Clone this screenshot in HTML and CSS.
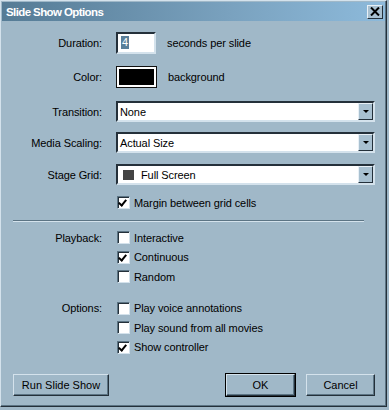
FILE: index.html
```html
<!DOCTYPE html>
<html lang="en">
<head>
    <meta charset="UTF-8">
    <title>Slide Show Options</title>
    <link rel="stylesheet" href="styles.css">
</head>
<body>
    <div class="window">
        <div class="titlebar">
            <span class="title">Slide Show Options</span>
            <button class="close-btn">
                <svg width="10" height="9" viewBox="0 0 10 9"><path d="M1 0.5 L9 8.5 M9 0.5 L1 8.5" stroke="#000" stroke-width="2"/></svg>
            </button>
        </div>

        <div class="content">
            <div class="form-row row-duration">
                <label>Duration:</label>
                <div class="field">
                    <span class="text-input"><span class="selected-text">4</span></span>
                    <span class="hint">seconds per slide</span>
                </div>
            </div>

            <div class="form-row row-color">
                <label>Color:</label>
                <div class="field">
                    <span class="swatch"><span class="swatch-fill"></span></span>
                    <span class="hint">background</span>
                </div>
            </div>

            <div class="form-row row-transition">
                <label>Transition:</label>
                <div class="select">
                    <span class="select-value">None</span>
                    <span class="select-btn"><span class="arrow"></span></span>
                </div>
            </div>

            <div class="form-row row-scaling">
                <label>Media Scaling:</label>
                <div class="select">
                    <span class="select-value">Actual Size</span>
                    <span class="select-btn"><span class="arrow"></span></span>
                </div>
            </div>

            <div class="form-row row-grid">
                <label>Stage Grid:</label>
                <div class="select">
                    <span class="select-value"><span class="grid-icon"></span>Full Screen</span>
                    <span class="select-btn"><span class="arrow"></span></span>
                </div>
            </div>

            <div class="form-row check-row row-margin">
                <span></span>
                <div class="check"><span class="box checked"></span>Margin between grid cells</div>
            </div>

            <div class="separator"></div>

            <div class="group group-playback">
                <div class="form-row check-row">
                    <label>Playback:</label>
                    <div class="check"><span class="box"></span>Interactive</div>
                </div>
                <div class="form-row check-row">
                    <span></span>
                    <div class="check"><span class="box checked"></span>Continuous</div>
                </div>
                <div class="form-row check-row">
                    <span></span>
                    <div class="check"><span class="box"></span>Random</div>
                </div>
            </div>

            <div class="group group-options">
                <div class="form-row check-row">
                    <label>Options:</label>
                    <div class="check"><span class="box"></span>Play voice annotations</div>
                </div>
                <div class="form-row check-row">
                    <span></span>
                    <div class="check"><span class="box"></span>Play sound from all movies</div>
                </div>
                <div class="form-row check-row">
                    <span></span>
                    <div class="check"><span class="box checked"></span>Show controller</div>
                </div>
            </div>

            <div class="button-bar">
                <button class="btn btn-run">Run Slide Show</button>
                <span class="spacer"></span>
                <button class="btn btn-default">OK</button>
                <button class="btn">Cancel</button>
            </div>
        </div>
    </div>
</body>
</html>
```

FILE: styles.css
```css
:root {
    --face: #a0b8c8;
    --light: #d4e2ec;
    --shadow: #5c7484;
    --dark: #24303a;
}

* {
    box-sizing: border-box;
    margin: 0;
    padding: 0;
}

body {
    background: var(--face);
    font-family: 'Liberation Sans', Arial, sans-serif;
    font-size: 11px;
    letter-spacing: -0.1px;
    color: #000;
}

.window {
    width: 387px;
    height: 407px;
    background: var(--face);
    border-top: 1px solid var(--light);
    border-left: 1px solid var(--light);
    border-right: 1px solid var(--dark);
    border-bottom: 1px solid var(--dark);
    box-shadow: inset -1px -1px 0 var(--shadow);
    padding: 1px;
}

/* title bar */
.titlebar {
    height: 19px;
    display: flex;
    align-items: center;
    justify-content: space-between;
    padding: 0 2px 0 4px;
    background: linear-gradient(90deg, #557b95 0%, #7aa2bf 60%, #8dbadb 100%);
}

.title {
    color: #fff;
    font-weight: bold;
    font-size: 11.5px;
    letter-spacing: -0.6px;
}

.close-btn {
    width: 16px;
    height: 14px;
    display: flex;
    align-items: center;
    justify-content: center;
    background: #a8c0d0;
    border: 1px solid;
    border-color: #e8f0f6 var(--dark) var(--dark) #e8f0f6;
}

/* form */
.content {
    padding: 0 10px 0 0;
}

.form-row {
    display: grid;
    grid-template-columns: 100px 259px;
    column-gap: 14px;
    align-items: center;
}

.form-row label {
    text-align: right;
}

.row-duration { height: 22px; margin-top: 11px; }
.row-color { height: 22px; margin-top: 12px; }
.row-transition { height: 21px; margin-top: 13px; }
.row-scaling { height: 21px; margin-top: 10px; }
.row-grid { height: 21px; margin-top: 11px; }
.row-margin { margin-top: 8px; }

.field {
    display: flex;
    align-items: center;
}

.hint {
    margin-left: 11px;
}

.text-input {
    width: 40px;
    height: 22px;
    background: #fff;
    border: 2px solid;
    border-color: var(--dark) var(--light) var(--light) var(--dark);
    padding: 2px 0 0 3px;
    line-height: 13px;
}

.selected-text {
    display: inline-block;
    background: #5a7f99;
    color: #fff;
    padding: 0 1px;
}

.swatch {
    width: 41px;
    height: 22px;
    border: 1px solid #111;
    background: #fff;
    padding: 2px;
}

.swatch-fill {
    display: block;
    width: 100%;
    height: 100%;
    background: #000;
}

.select {
    height: 21px;
    display: flex;
    align-items: stretch;
    background: #fff;
    border: 2px solid;
    border-color: var(--dark) var(--light) var(--light) var(--dark);
}

.select-value {
    flex: 1;
    display: flex;
    align-items: center;
    padding-left: 2px;
}

.grid-icon {
    width: 11px;
    height: 10px;
    background: #444;
    margin: 0 7px 0 3px;
}

.select-btn {
    width: 15px;
    display: flex;
    align-items: center;
    justify-content: center;
    background: #a8c0d0;
    border: 1px solid;
    border-color: #e8f0f6 var(--dark) var(--dark) #e8f0f6;
}

.arrow {
    width: 0;
    height: 0;
    border-left: 3px solid transparent;
    border-right: 3px solid transparent;
    border-top: 3px solid #000;
}

/* checkboxes */
.check-row {
    height: 19px;
}

.group .check-row {
    height: 19.5px;
}

.check {
    display: flex;
    align-items: center;
    padding-left: 1px;
}

.box {
    width: 13px;
    height: 13px;
    background: #fff;
    border: 1px solid;
    border-color: var(--shadow) var(--light) var(--light) var(--shadow);
    box-shadow: inset 1px 1px 0 var(--dark);
    margin-right: 4px;
    position: relative;
}

.box.checked::after {
    content: '';
    position: absolute;
    left: 2px;
    top: 1px;
    width: 3px;
    height: 6px;
    border-right: 2px solid #000;
    border-bottom: 2px solid #000;
    transform: rotate(40deg);
}

.separator {
    margin: 8px 11px 0 11px;
    height: 2px;
    border-top: 1px solid var(--shadow);
    border-bottom: 1px solid var(--light);
}

.group-playback { margin-top: 6px; }
.group-options { margin-top: 12px; }

/* buttons */
.button-bar {
    display: flex;
    gap: 11px;
    margin-top: 17px;
    padding-left: 11px;
}

.spacer {
    flex: 1;
}

.btn {
    width: 69px;
    height: 22px;
    font-family: inherit;
    font-size: 11px;
    background: var(--face);
    border: 1px solid;
    border-color: var(--light) var(--dark) var(--dark) var(--light);
    box-shadow: inset -1px -1px 0 var(--shadow);
}

.btn-run {
    width: 96px;
}

.btn-default {
    outline: 1px solid #000;
    outline-offset: 0;
    border-color: var(--light) var(--dark) var(--dark) var(--light);
}
```
